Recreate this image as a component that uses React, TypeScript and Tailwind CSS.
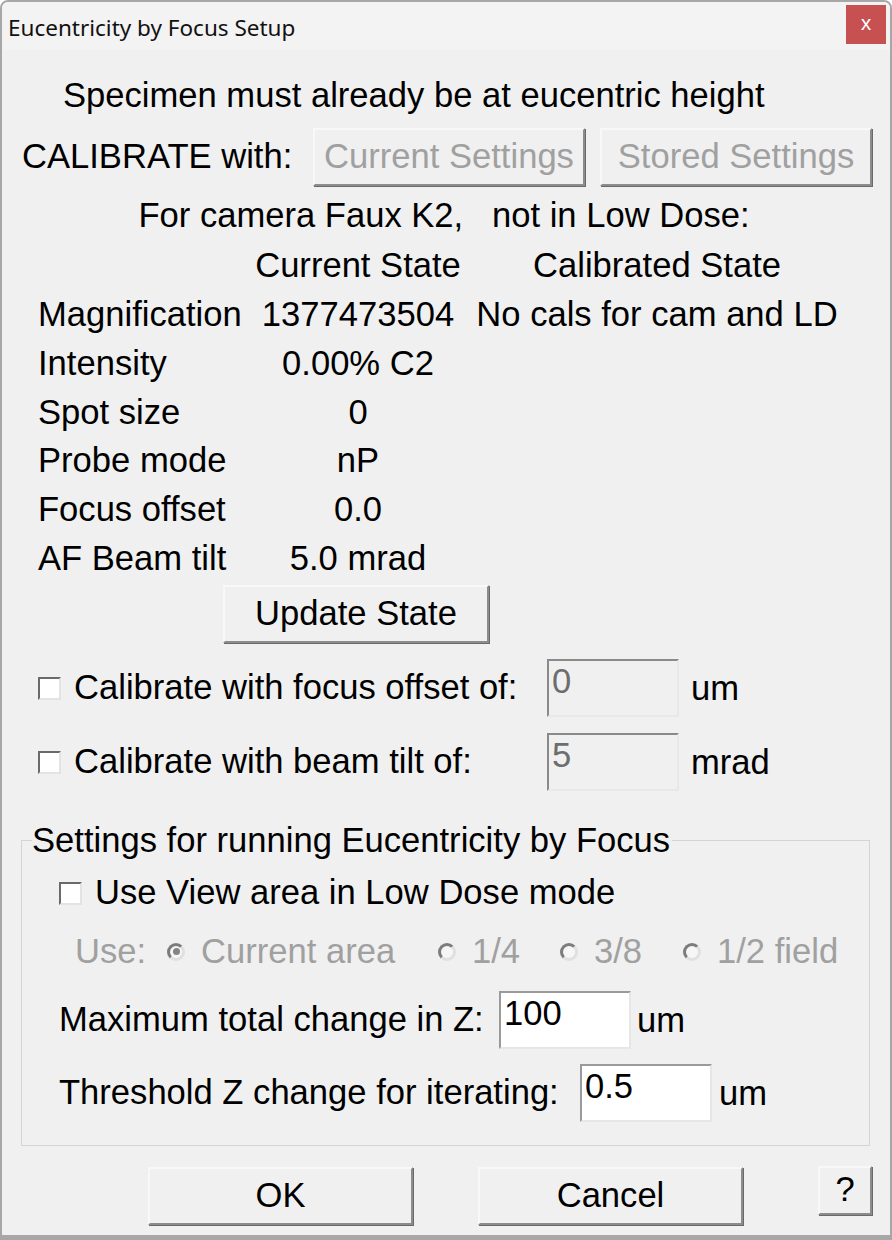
import React from "react";

const font = "font-[family-name:'Liberation_Sans',Arial,sans-serif]";

function WinButton({
  label,
  disabled,
  className,
}: {
  label: string;
  disabled?: boolean;
  className: string;
}) {
  return (
    <div
      className={`flex shrink-0 items-center justify-center border-2 border-t-[#f8f8f8] border-l-[#f8f8f8] border-r-[#8c8c8c] border-b-[#8c8c8c] bg-[#f0f0f0] shadow-[1px_1px_0_#6a6a6a] ${
        disabled ? "text-[#a0a0a0]" : "text-black"
      } ${className}`}
    >
      {label}
    </div>
  );
}

function CheckBox() {
  return (
    <div className="h-[23px] w-[23px] shrink-0 border-2 border-t-[#6a6a6a] border-l-[#6a6a6a] border-r-[#e3e3e3] border-b-[#e3e3e3] bg-white" />
  );
}

function Radio({ checked }: { checked?: boolean }) {
  return (
    <div className="flex h-[18px] w-[18px] shrink-0 items-center justify-center rounded-full border-[3px] border-t-[#7c7c7c] border-l-[#7c7c7c] border-r-[#e0e0e0] border-b-[#e0e0e0] bg-[#f6f6f6]">
      {checked && <div className="h-[7px] w-[7px] rounded-full bg-[#858585]" />}
    </div>
  );
}

function NumField({ value, disabled }: { value: string; disabled?: boolean }) {
  return (
    <div
      className={`h-[58px] w-[132px] shrink-0 border-2 pl-[3px] pt-[2px] leading-[36px] ${
        disabled
          ? "border-t-[#8a8a8a] border-l-[#8a8a8a] border-r-[#e8e8e8] border-b-[#e8e8e8] bg-[#f0f0f0] text-[#6d6d6d]"
          : "border-t-[#9a9a9a] border-l-[#9a9a9a] border-r-[#e6e6e6] border-b-[#e6e6e6] bg-white text-black"
      }`}
    >
      {value}
    </div>
  );
}

const stateRows: [string, string, string][] = [
  ["Magnification", "1377473504", "No cals for cam and LD"],
  ["Intensity", "0.00% C2", ""],
  ["Spot size", "0", ""],
  ["Probe mode", "nP", ""],
  ["Focus offset", "0.0", ""],
  ["AF Beam tilt", "5.0 mrad", ""],
];

const areas = [
  { label: "Current area", checked: true, w: "w-[271px]" },
  { label: "1/4", checked: false, w: "w-[122px]" },
  { label: "3/8", checked: false, w: "w-[123px]" },
  { label: "1/2 field", checked: false, w: "w-[180px]" },
];

export default function App() {
  return (
    <div
      className={`flex h-[1240px] w-[892px] flex-col overflow-hidden rounded-t-[8px] border-2 border-b-[5px] border-[#a7a7a7] bg-[#f0f0f0] ${font} text-[34.6px] text-black`}
    >
      {/* title bar */}
      <div className="flex h-[48px] shrink-0 items-start justify-between bg-[#f3f3f3]">
        <span className="pl-[6px] pt-[9px] font-[family-name:'Noto_Sans',sans-serif] text-[22.5px] leading-[34px] text-[#111]">
          Eucentricity by Focus Setup
        </span>
        <div className="mr-[4px] mt-[3px] flex h-[39px] w-[40px] items-center justify-center bg-[#c75050] pb-[4px] font-[family-name:'Noto_Sans',sans-serif] text-[20px] text-white">
          x
        </div>
      </div>

      {/* body */}
      <div className="flex flex-col pt-[22px]">
        <div className="flex h-[48px] items-center pl-[61px]">
          Specimen must already be at eucentric height
        </div>

        <div className="mt-[8px] flex h-[58px] items-center">
          <span className="ml-[20px] w-[291px]">CALIBRATE with:</span>
          <WinButton
            label="Current Settings"
            disabled
            className="h-[58px] w-[272px]"
          />
          <WinButton
            label="Stored Settings"
            disabled
            className="ml-[15px] h-[58px] w-[272px]"
          />
        </div>

        <div className="mt-[5px] flex h-[49px] items-center justify-center whitespace-pre pr-[4px]">
          {"For camera Faux K2,   not in Low Dose:"}
        </div>

        <div className="grid h-[49px] grid-cols-[212px_216px_382px] items-center pl-[36px]">
          <span />
          <span className="text-center">Current State</span>
          <span className="text-center">Calibrated State</span>
        </div>

        {stateRows.map(([label, value, cal]) => (
          <div
            key={label}
            className="grid h-[48.8px] grid-cols-[212px_216px_382px] items-center pl-[36px]"
          >
            <span>{label}</span>
            <span className="text-center">{value}</span>
            <span className="whitespace-nowrap text-center">{cal}</span>
          </div>
        ))}

        <WinButton
          label="Update State"
          className="ml-[221px] mt-[3px] h-[58px] w-[266px]"
        />

        <div className="mt-[16px] flex items-center">
          <div className="ml-[36px] mt-[2px]">
            <CheckBox />
          </div>
          <span className="ml-[13px] w-[473px]">
            Calibrate with focus offset of:
          </span>
          <NumField value="0" disabled />
          <span className="ml-[12px] mt-[2px]">um</span>
        </div>

        <div className="mt-[16px] flex items-center">
          <div className="ml-[36px] mt-[2px]">
            <CheckBox />
          </div>
          <span className="ml-[13px] w-[473px]">Calibrate with beam tilt of:</span>
          <NumField value="5" disabled />
          <span className="ml-[12px] mt-[2px]">mrad</span>
        </div>

        {/* group box */}
        <div className="relative ml-[19px] mt-[49px] flex h-[306px] w-[849px] flex-col border border-[#d4d4d4] pt-[28px]">
          <span className="absolute left-[10px] top-[-21px] bg-[#f0f0f0] pr-[2px] leading-[40px]">
            Settings for running Eucentricity by Focus
          </span>

          <div className="flex h-[48px] items-center">
            <div className="ml-[37px] mt-[2px]">
              <CheckBox />
            </div>
            <span className="ml-[13px]">Use View area in Low Dose mode</span>
          </div>

          <div className="mt-[11px] flex h-[48px] items-center text-[#a0a0a0]">
            <span className="ml-[53px] w-[92px]">Use:</span>
            {areas.map((a) => (
              <div key={a.label} className={`flex shrink-0 items-center ${a.w}`}>
                <Radio checked={a.checked} />
                <span className="ml-[16px]">{a.label}</span>
              </div>
            ))}
          </div>

          <div className="mt-[15px] flex items-center">
            <span className="ml-[37px] w-[440px]">Maximum total change in Z:</span>
            <NumField value="100" />
            <span className="ml-[6px] mt-[2px]">um</span>
          </div>

          <div className="mt-[15px] flex items-center">
            <span className="ml-[37px] w-[521px]">
              Threshold Z change for iterating:
            </span>
            <NumField value="0.5" />
            <span className="ml-[7px] mt-[2px]">um</span>
          </div>
        </div>

        {/* bottom buttons */}
        <div className="mt-[20px] flex items-start">
          <WinButton label="OK" className="ml-[146px] mt-[1px] h-[58px] w-[265px]" />
          <WinButton label="Cancel" className="ml-[65px] mt-[1px] h-[58px] w-[265px]" />
          <WinButton label="?" className="ml-[75px] h-[49px] w-[54px]" />
        </div>
      </div>
    </div>
  );
}
